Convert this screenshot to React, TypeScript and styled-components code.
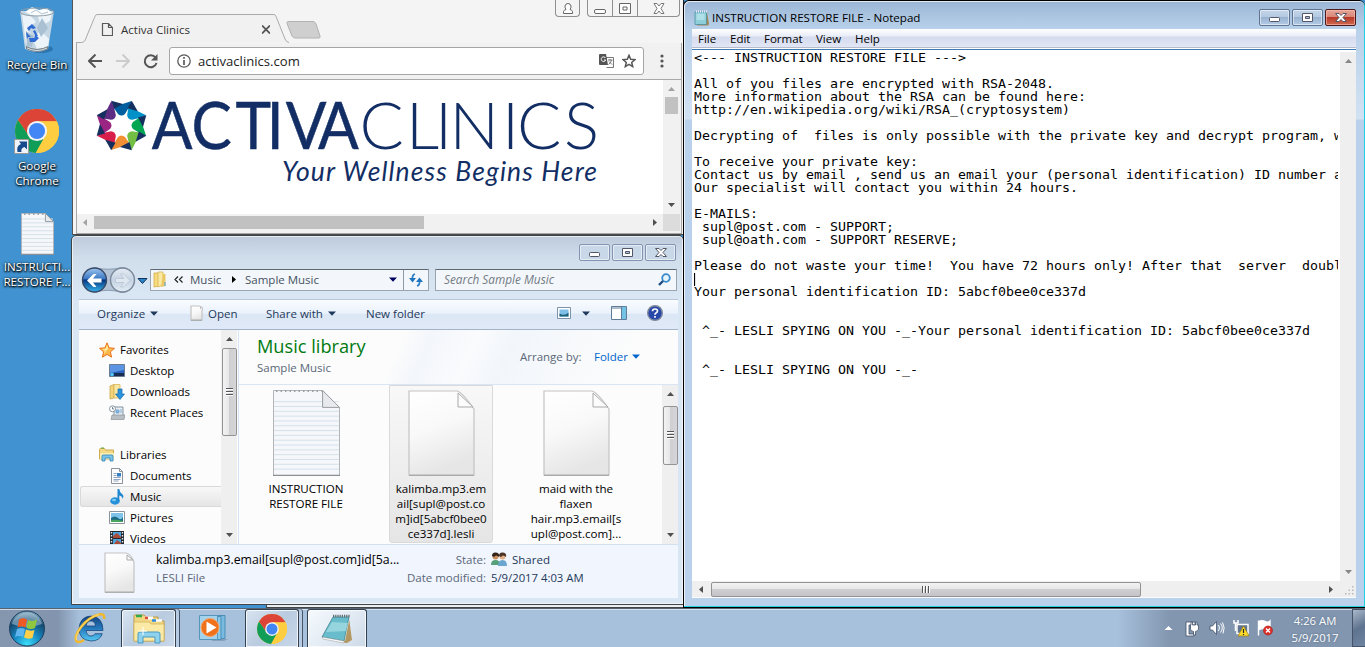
import React from "react";
import styled, { createGlobalStyle, css } from "styled-components";

const Global = createGlobalStyle`
  * { box-sizing: border-box; }
  html, body { margin: 0; padding: 0; overflow: hidden; }
  body { font-family: "Open Sans", "Noto Sans", sans-serif; font-size: 11.5px; color: #000; }
  svg { display: block; flex: none; }
`;

const Desktop = styled.div`
  position: relative;
  width: 1365px;
  height: 647px;
  overflow: hidden;
  background: #4093d0;
`;

/* ---------- shared text and parts ---------- */

const Label = styled.span<{ $color?: string; $size?: number; $ls?: number; $w?: number }>`
  display: block;
  flex: none;
  white-space: pre;
  line-height: 15px;
  color: ${(p) => p.$color ?? "#000"};
  font-size: ${(p) => p.$size ?? 11.5}px;
  letter-spacing: ${(p) => p.$ls ?? 0}px;
  width: ${(p) => (p.$w ? `${p.$w}px` : "auto")};
`;

const Spacer = styled.div<{ $w?: number }>`
  flex: ${(p) => (p.$w === undefined ? "1 1 0" : `0 0 ${p.$w}px`)};
`;

const Down = ({ c = "#1e395b", w = 8 }: { c?: string; w?: number }) => (
  <svg width={w} height={w / 2 + 1} viewBox="0 0 8 5"><path d="M0 .5h8L4 4.8z" fill={c} /></svg>
);

/* ---------- desktop icons ---------- */

const Shortcuts = styled.div`
  position: absolute;
  left: 0;
  top: 0;
  width: 74px;
`;

const Shortcut = styled.div<{ $h: number; $pad: number; $gap: number }>`
  height: ${(p) => p.$h}px;
  padding-top: ${(p) => p.$pad}px;
  display: flex;
  flex-direction: column;
  align-items: center;
  gap: ${(p) => p.$gap}px;
`;

const ShortcutText = styled.div`
  width: 72px;
  font-size: 11.6px;
  line-height: 15px;
  color: #fff;
  text-align: center;
  white-space: pre;
  text-shadow: 0 1px 2px #000, 1px 1px 2px rgba(0, 0, 0, 0.9), 0 0 3px rgba(0, 0, 0, 0.6);
`;

const RecycleBin = () => (
  <svg width="38" height="48" viewBox="0 0 38 48">
    <ellipse cx="23" cy="43" rx="12" ry="4" fill="#1d5f99" opacity=".6" />
    <path d="M2 5 7 43q12 6 23 0L36 5z" fill="#c4d6e4" />
    <path d="M4 8 8 38l6-9-5-6 9-7-6-7zM19 8l4 12 9-5 2-8zM14 31l9-6 8 8-1 8-11 2z" fill="#edf4f9" />
    <path d="m8 25 8 5-2 11-5-1zM24 12l6 10-7 9-4-9z" fill="#a9c1d3" />
    <path d="M7 6 14 1l7 3 8-2 5 5-8 4-10-1z" fill="#fafcfd" />
    <path d="m13 7 5-3 6 4 6-2" fill="none" stroke="#afc2d0" />
    <ellipse cx="19" cy="6" rx="17" ry="4" fill="none" stroke="#8b9ba8" />
    <path d="M8 40q11 6 22 0v3q-11 6-22 0z" fill="#75818a" /><path d="M9 42q10 5 20 0" stroke="#dce3e6" fill="none" />
    <path d="m9 22 5-4 4 4-3 1-2-1-2 3zM17 24l3 6-4 2 1-3-2-4zM8 26l5 5h-3l-1 2zM11 32h6l1-2 3 2-4 4h-5z" fill="#2f6bd2" />
  </svg>
);

const ChromeLogo = ({ size }: { size: number }) => (
  <svg width={size} height={size} viewBox="0 0 48 48">
    <circle cx="24" cy="24" r="24" fill="#ffcd40" />
    <path d="M3.2 12A24 24 0 0 1 44.8 12L45.5 13.5H24L14.9 29.3z" fill="#db4437" />
    <path d="M3.2 12A24 24 0 0 0 22.5 47.9L33 29.2H15z" fill="#0f9d58" />
    <path d="M24 13.3h21.6A24 24 0 0 1 23 48l10.3-18.7z" fill="#ffcd40" />
    <circle cx="24" cy="24" r="11" fill="#f4f4f4" />
    <circle cx="24" cy="24" r="8.8" fill="#4285f4" />
  </svg>
);

const ChromeShortcut = () => (
  <svg width="48" height="46" viewBox="0 0 48 46">
    <g transform="translate(2 0)"><ChromeLogo size={44} /></g>
    <rect x="1.5" y="30.5" width="14" height="14" fill="#eef4fa" stroke="#9a9a9a" />
    <path d="M4.500 43q-1.500-6 3.500-8l-2-2.500h8v8l-2.500-2.500Q7.500 39 8.500 43z" fill="#164a8c" />
  </svg>
);

const TextFile = ({ w, h, lines }: { w: number; h: number; lines: number }) => {
  const fold = w * 0.26;
  const body = `M.5 .5H${w - fold}L${w - 0.5} ${fold}V${h - 0.5}H.5z`;
  return (
    <svg width={w} height={h} viewBox={`0 0 ${w} ${h}`}>
      <path d={body} fill="#f5f7fa" stroke="#b2b6ba" />
      {Array.from({ length: lines }, (_, i) => (
        <path key={i} d={`M1 ${h * 0.13 + (i * h * 0.84) / lines + 0.5}H${w - 1}`} stroke="#d5e1ea" />
      ))}
      <path d={`M${w - fold} .5V${fold}H${w - 0.5}z`} fill="#e7e9ec" stroke="#9a9ea2" />
      <path d={`M3 1H${w - fold - 1}`} stroke="#9ea2a6" strokeWidth="2" strokeDasharray="1.5 3" />
      <path d={`M0 ${h - 0.6}H${w}`} stroke="#8b8f95" strokeWidth="1.2" />
    </svg>
  );
};

const BlankFile = ({ w, h, id }: { w: number; h: number; id: string }) => {
  const f = Math.round(w * 0.26);
  return (
    <svg width={w} height={h} viewBox={`0 0 ${w} ${h}`}>
      <defs>
        <linearGradient id={id} x1="0" y1="0" x2=".3" y2="1">
          <stop offset="0" stopColor="#fff" /><stop offset=".5" stopColor="#f9f9f9" /><stop offset="1" stopColor="#e6e6e6" />
        </linearGradient>
      </defs>
      <path d={`M1 1H${w - f - 1}Q${w - f + 4} 2 ${w - 1} ${f + 2}V${h - 1}H1z`} fill={`url(#${id})`} stroke="#c3c3c3" strokeWidth="1.2" />
      <path d={`M${w - f} 3V${f}H${w - 2}z`} fill="#fcfcfc" stroke="#a9a9a9" />
      <path d={`M1 ${h - 0.7}H${w - 1}`} stroke="#aaa" strokeWidth="1.2" />
    </svg>
  );
};

/* ---------- browser window ---------- */

const BrowserWindow = styled.section`
  position: absolute;
  left: 72px;
  top: 0;
  width: 612px;
  height: 235px;
  background: #f4f4f4;
  border-left: 1px solid #555;
  border-bottom: 1px solid #4a4a4a;
  border-right: 1px solid #222;
  padding-left: 1px;
  display: flex;
  flex-direction: column;
`;

const TabStrip = styled.div`
  height: 43px;
  flex: none;
  display: flex;
  align-items: flex-start;
  padding-left: 2px;
`;

const Tab = styled.div`
  position: relative;
  width: 212px;
  height: 43px;
  margin-top: 0;
  display: flex;
  align-items: center;
  padding: 15px 0 0 25px;
  gap: 8px;
  & > svg, & > span { position: relative; }
`;

const TabShape = styled.svg`
  && { position: absolute; left: 0; top: 0; }
`;

const BrowserButtons = styled.div`
  display: flex;
  gap: 7px;
`;

const ButtonGroup = styled.div`
  display: flex;
  height: 17px;
  border: 1px solid #8f8f8f;
  border-top: 0;
  border-radius: 0 0 4px 4px;
`;

const GroupButton = styled.div<{ $w: number }>`
  width: ${(p) => p.$w}px;
  display: flex;
  justify-content: center;
  align-items: center;
  & + & { border-left: 1px solid #8f8f8f; }
`;

const BrowserBody = styled.div`
  flex: 1;
  margin: 0 1px 1px 2px;
  border: 1px solid #a8a8a8;
  border-top-width: 0;
  background: #f1f1f1;
  display: flex;
  flex-direction: column;
`;

const AddressRow = styled.div`
  height: 37px;
  flex: none;
  display: flex;
  align-items: center;
  padding: 0 12px 0 11px;
  border-bottom: 1px solid #a9a9a9;
`;

const Omnibox = styled.div`
  width: 475px;
  height: 28px;
  margin: 0 16px 0 11px;
  padding: 0 7px 0 7px;
  display: flex;
  flex: none;
  align-items: center;
  background: #fff;
  border: 1px solid #a6a6a6;
  border-radius: 3px;
`;

const PageGrid = styled.div`
  flex: 1;
  display: grid;
  grid-template: 134px 17px / 1fr 17px;
  margin: 0 1px 2px 0;
`;

const Page = styled.div`
  background: #fff;
  overflow: hidden;
`;

const FlatBar = styled.div<{ $vertical?: boolean }>`
  display: flex;
  flex-direction: ${(p) => (p.$vertical ? "column" : "row")};
  align-items: center;
  background: #f1f1f1;
  padding: ${(p) => (p.$vertical ? "7px 0 7px" : "0 6px 0 6px")};
`;

const FlatThumb = styled.div<{ $w: number; $h: number; $m: number; $vertical?: boolean }>`
  width: ${(p) => p.$w}px;
  height: ${(p) => p.$h}px;
  background: #c1c1c1;
  margin: ${(p) => (p.$vertical ? `${p.$m}px 0 auto` : `0 auto 0 ${p.$m}px`)};
`;

const Corner = styled.div`
  background: #dcdcdc;
`;

const petals = ["#005f9e", "#0091c8", "#00a651", "#72bf44", "#f08f33", "#d81e4b", "#9b2583", "#5c2d82"];

const BrandLogo = () => (
  <svg width="586" height="134" viewBox="77 80 586 134">
    <g transform="translate(121.5 125.5)">
      {petals.map((c, i) => (
        <g key={c} transform={`rotate(${i * 45})`}>
          <path d="M-8-21.500 1-21.500 10.200-24.600 8-19 3.500-11.500Q0-8.500-3.500-11.500L-8-18z" fill={c} />
          <path d="M-10.300-24.800 1.500-21.500-8-16.500z" fill="#152f5f" />
        </g>
      ))}
    </g>
    <g fill="#122e64" fontFamily="Lato, sans-serif">
      <text transform="translate(150 0) scale(.92 1)" y="149" fontSize="65.500" fontWeight="400" x="2 45 93 127 147.500 182.500" stroke="#122e64" strokeWidth=".5">ACTIVA</text>
      <text y="149" fontSize="65.500" fontWeight="300" x="359.500 406 435 449.500 502 517 564">CLINICS</text>
      <text x="282" y="181" fontSize="26.500" fontStyle="italic" textLength="315">Your Wellness Begins Here</text>
    </g>
  </svg>
);

const tri = {
  up: "M0 4h7L3.500 0z",
  down: "M0 0h7L3.500 4z",
  left: "M4 0v7L0 3.500z",
  right: "M0 0v7l4-3.500z",
};
const Tri = ({ d, c = "#505050" }: { d: keyof typeof tri; c?: string }) => {
  const side = d === "left" || d === "right";
  return <svg width={side ? 4 : 7} height={side ? 7 : 4}><path d={tri[d]} fill={c} /></svg>;
};

const Browser = () => (
  <BrowserWindow>
    <TabStrip>
      <Tab>
        <TabShape width="250" height="43">
          <path d="M0 42.500H5C8 42.500 9 41 10 38L18.500 17.500Q19.500 14.500 21 14.500H198Q199.500 14.500 200.500 17.500L209 39Q210.500 42.500 213 42.500" fill="#f1f1f1" stroke="#aaa" />
          <path d="M212 21.500h25q2 0 3 2.500l4 12q.5 2-1 2h-24q-2 0-3-2l-5-12.500q-.5-2 1.500-2z" fill="#cfcfcf" stroke="#b2b2b2" />
        </TabShape>
        <svg width="12" height="15"><path d="M1.500 1.500h6l4 4v8h-10zM7.500 1.500v4h4" fill="none" stroke="#5a5a5a" strokeWidth="1.200" /></svg>
        <Label $color="#333" $w={133}>Activa Clinics</Label>
        <svg width="8" height="9"><path d="m0 .5 8 8m0-8-8 8" stroke="#555" strokeWidth="1.800" /></svg>
      </Tab>
      <Spacer />
      <BrowserButtons>
        <ButtonGroup>
          <GroupButton $w={23}>
            <svg width="12" height="13"><path d="M1.500 11.500V9.500Q2 8 4 7.500 2.800 6 3 4 3.500 1.500 6 1.500T9 4Q9.200 6 8 7.500q2 .5 2.500 2v2z" fill="#fff" stroke="#666" /></svg>
          </GroupButton>
        </ButtonGroup>
        <ButtonGroup>
          <GroupButton $w={24}><svg width="12" height="13"><rect x=".5" y="7.500" width="11" height="4" rx="1.500" fill="#fff" stroke="#666" /></svg></GroupButton>
          <GroupButton $w={25}><svg width="12" height="11"><path d="M.5.500h11v10H.5zM4 4h4v3H4z" fill="#fff" stroke="#666" /></svg></GroupButton>
          <GroupButton $w={42}><svg width="12" height="11"><path d="M1 .5h3L6 3 8 .500h3L8 5.500l3 5H8L6 8l-2 2.500H1l3-5z" fill="#fff" stroke="#777" /></svg></GroupButton>
        </ButtonGroup>
      </BrowserButtons>
      <Spacer $w={3} />
    </TabStrip>
    <BrowserBody>
      <AddressRow>
        <svg width="14" height="14"><path d="M7.500.500 1 7l6.500 6.500M1.500 7H14" fill="none" stroke="#555" strokeWidth="2" /></svg>
        <Spacer $w={14} />
        <svg width="14" height="14"><path d="M6.500.500 13 7l-6.500 6.500M12.500 7H0" fill="none" stroke="#ccc" strokeWidth="2" /></svg>
        <Spacer $w={13} />
        <svg width="15" height="15"><path d="M12.500 3.500A6 6 0 1 0 13.500 9" fill="none" stroke="#555" strokeWidth="2" /><path d="M14.500 0v6.500H8z" fill="#555" /></svg>
        <Omnibox>
          <svg width="14" height="14"><circle cx="7" cy="7" r="6.200" fill="none" stroke="#5a5a5a" strokeWidth="1.300" /><path d="M7 6v5M7 3v1.700" stroke="#5a5a5a" strokeWidth="1.700" /></svg>
          <Spacer $w={7} />
          <Label $size={13.1} $color="#222">activaclinics.com</Label>
          <Spacer />
          <svg width="15" height="14">
            <path d="M6 3.500h8.500v10h-7" fill="#fff" stroke="#777" />
            <path d="M1 0h6l2 11H1Q0 11 0 10V1Q0 0 1 0z" fill="#555" />
            <path d="M6.500 4A2.300 2.300 0 1 0 6.700 6H5" fill="none" stroke="#fff" />
            <path d="M9 6h4.500M11 5v1M12.500 6Q12 9 9.500 10.500M10 7.500l3 3" fill="none" stroke="#666" strokeWidth=".9" />
          </svg>
          <Spacer $w={8} />
          <svg width="14" height="14"><path d="m7 1.300 1.700 4 4.300.3-3.300 2.800 1 4.200L7 10.400l-3.700 2.200 1-4.200L1 5.600l4.300-.3z" fill="none" stroke="#555" strokeWidth="1.500" /></svg>
        </Omnibox>
        <svg width="4" height="14"><g fill="#555"><circle cx="2" cy="2" r="1.600" /><circle cx="2" cy="7" r="1.600" /><circle cx="2" cy="12" r="1.600" /></g></svg>
      </AddressRow>
      <PageGrid>
        <Page><BrandLogo /></Page>
        <FlatBar $vertical>
          <Tri d="up" c="#a3a3a3" />
          <FlatThumb $vertical $w={13} $h={17} $m={6} />
          <Tri d="down" />
        </FlatBar>
        <FlatBar>
          <Tri d="left" c="#a3a3a3" />
          <FlatThumb $w={330} $h={13} $m={7} />
          <Tri d="right" />
        </FlatBar>
        <Corner />
      </PageGrid>
    </BrowserBody>
  </BrowserWindow>
);

/* ---------- Aero caption buttons and scroll bars ---------- */

const Caption = styled.div`
  display: flex;
  gap: 2px;
`;

const CaptionButton = styled.div<{ $kind: "glass" | "active" | "close" }>`
  width: 31px;
  height: 17px;
  display: flex;
  align-items: center;
  justify-content: center;
  border-radius: 2px;
  border: 1px solid ${(p) => (p.$kind === "close" ? "#4d1a1c" : p.$kind === "active" ? "#5f7493" : "#8494b0")};
  box-shadow: inset 0 0 0 1px ${(p) => (p.$kind === "close" ? "rgba(255,190,180,.6)" : "rgba(255,255,255,.5)")};
  background: ${(p) =>
    p.$kind === "close"
      ? "linear-gradient(#e5a497 0%, #d98776 48%, #b8392a 50%, #cf6a50 100%)"
      : p.$kind === "active"
        ? "linear-gradient(#c3d5e9 0%, #b3c8e0 48%, #98b2d1 50%, #b3cbe5 100%)"
        : "#c9d8e8"};
`;

const CaptionButtons = ({ active }: { active?: boolean }) => {
  const s = "#535666";
  return (
    <Caption>
      <CaptionButton $kind={active ? "active" : "glass"}><svg width="11" height="9"><rect x=".5" y="4.500" width="10" height="4" rx="1" fill="#fff" stroke={s} /></svg></CaptionButton>
      <CaptionButton $kind={active ? "active" : "glass"}><svg width="11" height="9"><path d="M.5.500h10v8H.5z" fill="#fff" stroke={s} /><path d="M3.500 3.500h4v2h-4z" fill="#a9bdd4" stroke={s} /></svg></CaptionButton>
      <CaptionButton $kind={active ? "close" : "glass"}><svg width="12" height="9"><path d="M.5.500h3.500L6 2.500 8 .500h3.500L8 4.500l3.500 4H8L6 6.500l-2 2H.5L4 4.500z" fill="#fff" stroke={s} /></svg></CaptionButton>
    </Caption>
  );
};

const AeroBar = styled.div<{ $vertical?: boolean; $len: number }>`
  flex: none;
  display: flex;
  align-items: center;
  background: #efefef;
  ${(p) =>
    p.$vertical
      ? css`flex-direction: column; width: 16px; height: ${p.$len}px; padding: 7px 0;`
      : css`height: 16px; width: ${p.$len}px; padding: 0 7px;`}
`;

const AeroThumb = styled.div<{ $vertical?: boolean; $len: number; $m: number }>`
  flex: none;
  display: flex;
  align-items: center;
  justify-content: center;
  border: 1px solid #939393;
  border-radius: 2px;
  ${(p) =>
    p.$vertical
      ? css`width: 15px; height: ${p.$len}px; margin: ${p.$m}px 0 auto; background: linear-gradient(90deg, #f3f3f3, #e6e6e8 48%, #cfcfd2 50%, #d6d6d9);`
      : css`height: 15px; width: ${p.$len}px; margin: 0 auto 0 ${p.$m}px; background: linear-gradient(#f3f3f3, #e6e6e8 48%, #cfcfd2 50%, #c4c4c8);`}
`;

/* ---------- explorer window ---------- */

const ExplorerWindow = styled.section`
  position: absolute;
  left: 71px;
  top: 235px;
  width: 613px;
  height: 370px;
  border: 1px solid #3e4347;
  border-radius: 5px 5px 0 0;
  box-shadow: inset 0 0 0 1px rgba(255, 255, 255, 0.65);
  background: linear-gradient(#bccadb 0, #d0deec 22px, #d9e6f3 60px, #d9e6f3);
  padding: 0 5px 6px 7px;
  display: flex;
  flex-direction: column;
`;

const ExplorerTitle = styled.div`
  height: 31px;
  flex: none;
  display: flex;
  justify-content: flex-end;
  padding: 8px 2px 0 0;
`;

const NavRow = styled.div`
  height: 32px;
  flex: none;
  display: flex;
  align-items: flex-start;
`;

const NavField = styled.div<{ $w: number }>`
  width: ${(p) => p.$w}px;
  height: 22px;
  margin-top: 2px;
  padding-bottom: 1px;
  display: flex;
  flex: none;
  align-items: center;
  background: #f3f7fb;
  border: 1px solid #9aa5b2;
  border-top-color: #5e6871;
  border-radius: 1px;
`;

const RefreshCell = styled.div`
  width: 25px;
  height: 20px;
  display: flex;
  align-items: center;
  justify-content: center;
  border-left: 1px solid #8d99a6;
`;

const CommandBar = styled.div`
  height: 31px;
  flex: none;
  display: flex;
  align-items: center;
  padding: 0 15px 3px 18px;
  border-top: 1px solid #b9c6d8;
  border-bottom: 1px solid #a3b4c9;
  background: linear-gradient(#fafcff 0, #eaf2fc 45%, #dce7f5 50%, #dfe9f7 100%);
`;

const ExplorerMain = styled.div`
  height: 214px;
  flex: none;
  display: flex;
  background: #fcfcfc;
  overflow: hidden;
`;

const Sidebar = styled.div`
  width: 142px;
  flex: none;
  padding-top: 9px;
  overflow: hidden;
`;

const SideRow = styled.div<{ $sub?: boolean; $selected?: boolean }>`
  height: 21px;
  display: flex;
  align-items: center;
  gap: 5px;
  padding-left: ${(p) => (p.$sub ? 28 : 18)}px;
  border: 1px solid transparent;
  margin-left: 1px;
  ${(p) =>
    p.$selected &&
    css`
      border-color: #d9d9d9;
      border-right: 0;
      border-radius: 3px 0 0 3px;
      background: linear-gradient(#f8f8f8, #e5e5e5);
    `}
`;

const Library = styled.div`
  flex: 1;
  min-width: 0;
  margin-left: 1px;
  border-left: 1px solid #d6e5f5;
  display: flex;
  flex-direction: column;
`;

const LibraryHead = styled.div`
  height: 55px;
  flex: none;
  display: flex;
  border-bottom: 1px solid #d9e5f3;
  padding: 6px 38px 0 18px;
  background: linear-gradient(115deg, #fcfcfc 36%, #f3f6fb 42%, #fafbfd 52%, #f2f6fb 60%, #fcfcfc 88%);
`;

const HeadText = styled.div`
  display: flex;
  flex-direction: column;
  justify-content: flex-end;
  gap: 6px;
  padding-bottom: 9px;
`;

const ArrangeRow = styled.div`
  display: flex;
  align-items: center;
  height: 41px;
`;

const Files = styled.div`
  flex: 1;
  display: flex;
  padding-left: 15px;
`;

const FileItem = styled.div<{ $selected?: boolean }>`
  width: 104px;
  height: 158px;
  flex: none;
  padding-top: 4px;
  display: flex;
  flex-direction: column;
  align-items: center;
  gap: 5px;
  border: 1px solid ${(p) => (p.$selected ? "#dadada" : "transparent")};
  border-radius: 0 0 3px 3px;
  background: ${(p) => (p.$selected ? "linear-gradient(#f8f8f8, #e5e5e5)" : "none")};
  & + & { margin-left: 31px; }
`;

const FileName = styled.div`
  font-size: 11.6px;
  line-height: 15px;
  text-align: center;
  white-space: pre;
`;

const Details = styled.div`
  height: 54px;
  flex: none;
  display: flex;
  padding: 7px 0 0 25px;
  border-top: 1px solid #d3e0f0;
  background: #f1f5fd;
`;

const DetailCol = styled.div<{ $w?: number; $right?: boolean }>`
  width: ${(p) => (p.$w ? `${p.$w}px` : "auto")};
  display: flex;
  flex-direction: column;
  align-items: ${(p) => (p.$right ? "flex-end" : "flex-start")};
  gap: 3px;
`;

const SharedRow = styled.div`
  display: flex;
  height: 15px;
  align-items: center;
  gap: 5px;
`;

const NavButtons = () => (
  <svg width="70" height="27" viewBox="80 267 70 27">
    <defs>
      <linearGradient id="backFill" x1="0" y1="0" x2="0" y2="1">
        <stop offset="0" stopColor="#9cc5ee" /><stop offset=".45" stopColor="#3977c4" /><stop offset=".5" stopColor="#06357f" /><stop offset="1" stopColor="#35b6ef" />
      </linearGradient>
      <linearGradient id="fwdFill" x1="0" y1="0" x2="0" y2="1">
        <stop offset="0" stopColor="#e5edf5" /><stop offset=".5" stopColor="#c4d2e2" /><stop offset="1" stopColor="#e4edf6" />
      </linearGradient>
    </defs>
    <path d="M94 267.500Q108 271 122 267.500A12.500 12.500 0 0 1 122 292.500Q108 288 94 292.500z" fill="#b4c4d6" stroke="#8c9db3" />
    <circle cx="94.500" cy="280" r="12" fill="url(#backFill)" stroke="#3a4b68" strokeWidth="1.400" />
    <circle cx="122.500" cy="280" r="12" fill="url(#fwdFill)" stroke="#7c899b" strokeWidth="1.400" />
    <path d="m87 280.500 6.500-6.500h3l-3.500 4.500h8.500v4H93l3.500 4.500h-3z" fill="#fff" />
    <path d="m130 280.500-6.500-6.500h-3l3.500 4.500h-8.500v4h8.500l-3.500 4.500h3z" fill="#dfe8f1" stroke="#b5c2d1" strokeWidth=".7" />
    <path d="M138 278.500h9l-4.500 5z" fill="#2a85c8" stroke="#14345e" />
  </svg>
);

const FolderIcon = () => (
  <svg width="14" height="17"><path d="M1 2h4l1 1v12l-5 1z" fill="#f6da7d" stroke="#d2ae4a" strokeWidth=".8" /><path d="M5 1h5v13l-5 2z" fill="#fbe9a3" stroke="#d7b657" strokeWidth=".8" /><path d="M10 3h2.500v12L8 16z" fill="#eac763" /><path d="M12 11v4" stroke="#4ea4d8" /></svg>
);

const icons: Record<string, React.ReactNode> = {
  star: <svg width="16" height="16"><path d="m8 .800 2.100 5 5.400.500-4.100 3.600 1.200 5.300L8 12.400l-4.600 2.800 1.200-5.300L.500 6.300l5.400-.500z" fill="#fcb94d" stroke="#e8741c" /><path d="m8 3 1.300 3.500L5 12l.8-3.500L3 7l3.500-.3z" fill="#ffe899" /></svg>,
  desktop: <svg width="16" height="14"><path d="M.5.500h15v12H.5z" fill="#2a62c0" stroke="#6d7d91" /><path d="M1 1h14v5L1 9z" fill="#5a94e3" /><path d="M5 9h10v3H5z" fill="#1a2c52" /><circle cx="3" cy="10.500" r="1.700" fill="#54c7ee" /></svg>,
  downloads: <svg width="16" height="16"><path d="M1 2l4-1.500V14l-4 1z" fill="#f3d47a" stroke="#c9a54b" strokeWidth=".8" /><path d="M5 .500h6V14H5z" fill="#fae7a2" stroke="#d7b65a" strokeWidth=".8" /><path d="M9 5h4v5h2.500L11 15.500 6.500 10H9z" fill="#2b94df" stroke="#1669a8" strokeWidth=".7" /></svg>,
  recent: <svg width="16" height="15"><path d="M5 2h9v10H5z" fill="#e8eef3" stroke="#8393a0" /><path d="M7 5h3v3H7zM11 5h2M11 7h2" fill="#85bae5" stroke="#6ba0cc" strokeWidth=".8" /><path d="M3 10h13l-1 4.500H2z" fill="#b9c0c5" stroke="#8b949b" strokeWidth=".7" /><circle cx="3.500" cy="3.800" r="3" fill="#fff" stroke="#8893a0" /><path d="M3.500 2v2H5" fill="none" stroke="#456" strokeWidth=".7" /></svg>,
  libraries: <svg width="16" height="15"><path d="M.5 2.500q0-1 1-1h4l1 1.500h8v9H.5z" fill="#f4da85" stroke="#cdaa50" /><path d="M1 6h14v6H1z" fill="#fbedb4" /><path d="M3 14V9q0-1 1-1h9q1 0 1 1v5h-3v-3H6v3z" fill="#78c4ea" stroke="#3388bb" strokeWidth=".8" /><path d="M2 1h3" stroke="#5ca848" /></svg>,
  documents: <svg width="16" height="16"><path d="M2.500.500h8l3 3v12h-11z" fill="#fff" stroke="#8b929a" /><path d="M10.500.500v3h3" fill="none" stroke="#8b929a" /><path d="M4.500 5.500h3M4.500 7.500h3M4.500 9.500h7M4.500 11.500h7M4.500 13h5" stroke="#879cba" strokeWidth=".9" /><path d="M8 5h4v3.500H8z" fill="#337fc5" /></svg>,
  music: <svg width="16" height="16"><ellipse cx="6" cy="12" rx="4.800" ry="3.700" fill="#2491da" /><path d="M8.500 0h1.800Q10.500 3 13 5t.5 5Q13.500 7 10.300 6.500V12H8.500z" fill="#1f86d0" /><ellipse cx="5" cy="11" rx="2" ry="1.300" fill="#7cc9f2" /></svg>,
  pictures: <svg width="16" height="14"><path d="M.5.500h15v12H.5z" fill="#fff" stroke="#8d949b" /><path d="M2 2h12v9H2z" fill="#7ec4ea" /><path d="M2 7q4-3 7 0t5-1v5H2z" fill="#1c6c86" /><path d="M2 9q5-1 12 1v1H2z" fill="#4aa55f" /></svg>,
  videos: <svg width="16" height="16"><path d="M1 0h14v16H1z" fill="#22282e" /><path d="M4 1h8v6H4zM4 8h8v7H4z" fill="#4fa3da" /><path d="m4 5 4-3 4 4v1H4zM5 13l3-4 4 3v3z" fill="#a94b37" /><path d="M2.500 1v14M13.500 1v14" stroke="#e8edf0" strokeWidth="1.400" strokeDasharray="1.500 1.500" /></svg>,
};

const places: { name?: string; icon?: string; sub?: boolean; selected?: boolean }[] = [
  { name: "Favorites", icon: "star" },
  { name: "Desktop", icon: "desktop", sub: true },
  { name: "Downloads", icon: "downloads", sub: true },
  { name: "Recent Places", icon: "recent", sub: true },
  {},
  { name: "Libraries", icon: "libraries" },
  { name: "Documents", icon: "documents", sub: true },
  { name: "Music", icon: "music", sub: true, selected: true },
  { name: "Pictures", icon: "pictures", sub: true },
  { name: "Videos", icon: "videos", sub: true },
];

const GripLines = () => (
  <svg width="7" height="9"><path d="M0 .500h7M0 3.500h7M0 6.500h7" stroke="#555" /><path d="M0 1.500h7M0 4.500h7M0 7.500h7" stroke="#fff" /></svg>
);

const Explorer = () => (
  <ExplorerWindow>
    <ExplorerTitle><CaptionButtons /></ExplorerTitle>
    <NavRow>
      <Spacer $w={1} />
      <NavButtons />
      <NavField $w={279}>
        <Spacer $w={2} />
        <FolderIcon />
        <Spacer $w={7} />
        <svg width="9" height="7"><path d="M4 .500 1 3.500l3 3M8.500.500l-3 3 3 3" fill="none" stroke="#222" strokeWidth="1.200" /></svg>
        <Spacer $w={7} />
        <Label $color="#46525f" $w={42}>Music</Label>
        <Tri d="right" c="#000" />
        <Spacer $w={9} />
        <Label $color="#46525f">Sample Music</Label>
        <Spacer />
        <Down c="#000060" />
        <Spacer $w={6} />
        <RefreshCell>
          <svg width="14" height="14"><path d="M6 1Q3 2 3.500 6M8 13q3-1 2.500-5" fill="none" stroke="#2f82c9" strokeWidth="1.800" /><path d="M0 5h7L3.500 9.500zM7 9h7l-3.500-4.500z" fill="#2374be" /></svg>
        </RefreshCell>
      </NavField>
      <Spacer $w={6} />
      <NavField $w={242}>
        <Spacer $w={8} />
        <Label $color="#747b84" $size={11.8} as="i">Search Sample Music</Label>
        <Spacer />
        <svg width="13" height="13"><circle cx="8" cy="5" r="3.800" fill="#e6f4fd" stroke="#3d8bcb" strokeWidth="1.800" /><path d="M5 8 1 12" stroke="#1c4b82" strokeWidth="2.400" /></svg>
        <Spacer $w={5} />
      </NavField>
    </NavRow>
    <CommandBar>
      <Label $color="#1e395b" $w={53}>Organize</Label><Down />
      <Spacer $w={32} />
      <BlankFile w={13} h={16} id="openFile" />
      <Spacer $w={5} />
      <Label $color="#1e395b" $w={58}>Open</Label>
      <Label $color="#1e395b" $w={62}>Share with</Label><Down />
      <Spacer $w={30} />
      <Label $color="#1e395b">New folder</Label>
      <Spacer />
      <svg width="14" height="12"><path d="M.5.500h13v11H.5z" fill="#fff" stroke="#7f93aa" /><path d="M2.500 2.500h9v7h-9z" fill="#7ebfe8" /><path d="M2.500 6.500q5 3 9-1v4h-9z" fill="#1a6179" /></svg>
      <Spacer $w={11} /><Down />
      <Spacer $w={21} />
      <svg width="16" height="14"><path d="M.5.500h15v13H.5z" fill="#fff" stroke="#5f7c99" /><path d="M1 2h9M10.500 1v12" stroke="#5f7c99" /><path d="M11 1h4v12h-4z" fill="#74c2e4" /></svg>
      <Spacer $w={20} />
      <svg width="16" height="16"><circle cx="8" cy="8" r="7.300" fill="#2848a9" stroke="#7d879c" strokeWidth="1.400" /><path d="M5.500 6.200Q5.500 4 8 4t2.500 2q0 1.200-1.500 2-1 .500-1 1.700M8 11v1.700" fill="none" stroke="#fff" strokeWidth="1.700" /></svg>
    </CommandBar>
    <ExplorerMain>
      <Sidebar>
        {places.map((p, i) => (
          <SideRow key={i} $sub={p.sub} $selected={p.selected}>
            {p.icon && icons[p.icon]}
            {p.name && <Label>{p.name}</Label>}
          </SideRow>
        ))}
      </Sidebar>
      <AeroBar $vertical $len={214}>
        <Tri d="up" />
        <AeroThumb $vertical $len={88} $m={7}><GripLines /></AeroThumb>
        <Tri d="down" />
      </AeroBar>
      <Library>
        <LibraryHead>
          <HeadText>
            <Label $size={18.2} $color="#007a10">Music library</Label>
            <Label $color="#5a6779">Sample Music</Label>
          </HeadText>
          <Spacer />
          <ArrangeRow>
            <Label $color="#5a6779" $w={74}>Arrange by:</Label>
            <Label $color="#0066cc" $w={38}>Folder</Label>
            <Down c="#0066cc" />
          </ArrangeRow>
        </LibraryHead>
        <Files>
          <FileItem>
            <TextFile w={67} h={86} lines={15} />
            <FileName>{"INSTRUCTION\nRESTORE FILE"}</FileName>
          </FileItem>
          <FileItem $selected>
            <BlankFile w={67} h={86} id="fileA" />
            <FileName>{"kalimba.mp3.em\nail[supl@post.co\nm]id[5abcf0bee0\nce337d].lesli"}</FileName>
          </FileItem>
          <FileItem>
            <BlankFile w={67} h={86} id="fileB" />
            <FileName>{"maid with the\nflaxen\nhair.mp3.email[s\nupl@post.com]..."}</FileName>
          </FileItem>
          <Spacer />
          <AeroBar $vertical $len={159}>
            <Tri d="up" />
            <AeroThumb $vertical $len={59} $m={10}><GripLines /></AeroThumb>
            <Tri d="down" />
          </AeroBar>
        </Files>
      </Library>
    </ExplorerMain>
    <Details>
      <BlankFile w={31} h={41} id="detailFile" />
      <Spacer $w={21} />
      <DetailCol $w={245}>
        <Label $size={12.3}>kalimba.mp3.email[supl@post.com]id[5a...</Label>
        <Label $color="#5a6779">LESLI File</Label>
      </DetailCol>
      <DetailCol $w={85} $right>
        <Label $color="#5a6779">State:</Label>
        <Label $color="#5a6779">Date modified:</Label>
      </DetailCol>
      <Spacer $w={5} />
      <DetailCol>
        <SharedRow>
          <svg width="16" height="15"><circle cx="4.500" cy="4.500" r="3" fill="#c98f61" /><path d="M1 4Q1 0 5 .500T8 5Q5 2 3 5z" fill="#33231b" /><path d="M0 13Q0 8 4.500 8T9 13z" fill="#55a079" /><circle cx="11.500" cy="4.500" r="3" fill="#e0b088" /><path d="M8 4Q8 0 12 .500T15 5Q12 2 10 5z" fill="#4b3325" /><path d="M7 14Q7 8 11.500 8t4.500 6z" fill="#6ba6ce" /></svg>
          <Label $color="#1e395b">Shared</Label>
        </SharedRow>
        <Label $color="#1e395b" $size={11.3}>5/9/2017 4:03 AM</Label>
      </DetailCol>
    </Details>
  </ExplorerWindow>
);

/* ---------- notepad window ---------- */

const NotepadWindow = styled.section`
  position: absolute;
  left: 683px;
  top: 0;
  width: 682px;
  height: 608px;
  border: 1px solid #000;
  border-width: 1px 0 1px 1px;
  border-radius: 6px 6px 0 0;
  box-shadow: inset -1px -1px 0 #22cfe0, inset 1px 1px 0 rgba(255, 255, 255, 0.7);
  background: linear-gradient(#9ab6d5 0, #b9d1ea 28px, #d2e2f3 118px, #b9d1ea 119px, #b9d1ea);
  padding: 0 9px 8px 8px;
  display: flex;
  flex-direction: column;
`;

const NotepadTitle = styled.div`
  height: 28px;
  flex: none;
  display: flex;
  align-items: center;
  padding: 5px 0 0 2px;
`;

const MenuBar = styled.div`
  height: 20px;
  flex: none;
  display: grid;
  grid-template-columns: 32px 34px 52px 39px auto;
  align-items: center;
  padding: 0 0 1px 6px;
  background: linear-gradient(#fff 0, #e9edf7 7px, #d5dbee 8px, #e2e6f5 18px, #b6bccc 18px);
  border-bottom: 1px solid #fff;
`;

const TextArea = styled.div`
  height: 549px;
  flex: none;
  display: flex;
  padding-top: 2px;
  border-top: 1px solid #3f79b5;
  border-bottom: 1px solid #f8fbff;
  background: #fff;
  justify-content: flex-end;
`;

const TextColumn = styled.div`
  flex: 1;
  min-width: 0;
  display: flex;
  flex-direction: column;
`;

const TextView = styled.div`
  flex: 1;
  width: 646px;
  padding: 0 0 0 2px;
  overflow: hidden;
`;

const TextLine = styled.div<{ $caret?: boolean }>`
  width: 583px;
  height: 13px;
  transform: scaleX(1.1072);
  transform-origin: 0 0;
  font-family: "DejaVu Sans Mono", monospace;
  font-size: 12px;
  line-height: 13px;
  white-space: pre;
  border-left: 1px solid ${(p) => (p.$caret ? "#000" : "transparent")};
  text-indent: -1px;
`;

const lines = [
  "<--- INSTRUCTION RESTORE FILE --->",
  "",
  "All of you files are encrypted with RSA-2048.",
  "More information about the RSA can be found here:",
  "http://en.wikipedia.org/wiki/RSA_(cryptosystem)",
  "",
  "Decrypting of  files is only possible with the private key and decrypt program, w",
  "",
  "To receive your private key:",
  "Contact us by email , send us an email your (personal identification) ID number a",
  "Our specialist will contact you within 24 hours.",
  "",
  "E-MAILS:",
  " supl@post.com - SUPPORT;",
  " supl@oath.com - SUPPORT RESERVE;",
  "",
  "Please do not waste your time!  You have 72 hours only! After that  server  doubl",
  "",
  "Your personal identification ID: 5abcf0bee0ce337d",
  "",
  "",
  " ^_- LESLI SPYING ON YOU -_-Your personal identification ID: 5abcf0bee0ce337d",
  "",
  "",
  " ^_- LESLI SPYING ON YOU -_-",
];

const ScrollColumn = styled.div`
  display: flex;
  flex-direction: column;
  width: 16px;
  background: #efefef;
`;

const Grip = styled.svg`
  margin: 5px 0 0 4px;
`;

const Notepad = () => (
  <NotepadWindow>
    <NotepadTitle>
      <svg width="15" height="16"><path d="M2 2h11l2 12-1 1.500H3z" fill="#a9854f" /><path d="M1 2h11.500v12.500H1z" fill="#8ecfda" stroke="#4b8fa0" strokeWidth=".8" /><path d="M2.500 5h8M2.500 7h8M2.500 9h8" stroke="#d0f0f4" /><path d="M2 1.500h11" stroke="#eef" strokeWidth="2" strokeDasharray="1 1" /></svg>
      <Spacer $w={3} />
      <Label $size={11.6}>INSTRUCTION RESTORE FILE - Notepad</Label>
      <Spacer />
      <CaptionButtons active />
    </NotepadTitle>
    <MenuBar>
      {["File", "Edit", "Format", "View", "Help"].map((m) => <Label key={m}>{m}</Label>)}
    </MenuBar>
    <TextArea>
      <TextColumn>
        <TextView>
          {lines.map((t, i) => <TextLine key={i} $caret={i === 17}>{t}</TextLine>)}
        </TextView>
        <AeroBar $len={648}>
          <Tri d="left" />
          <AeroThumb $len={430} $m={8}>
            <svg width="9" height="7"><path d="M.500 0v7M3.500 0v7M6.500 0v7" stroke="#555" /><path d="M1.500 0v7M4.500 0v7M7.500 0v7" stroke="#fff" /></svg>
          </AeroThumb>
          <Tri d="right" />
        </AeroBar>
      </TextColumn>
      <ScrollColumn>
        <AeroBar $vertical $len={529}>
          <Tri d="up" c="#888" />
          <Spacer />
          <Tri d="down" c="#888" />
        </AeroBar>
        <Grip width="10" height="9"><path d="M8 0h1.500v1.500H8zM8 3.500h1.500V5H8zM8 7h1.500v1.500H8zM4.500 3.500H6V5H4.500zM4.500 7H6v1.500H4.500zM1 7h1.500v1.500H1z" fill="#b9b9b9" /></Grip>
      </ScrollColumn>
    </TextArea>
  </NotepadWindow>
);

/* ---------- taskbar ---------- */

const HiddenEdge = styled.div`
  position: absolute;
  left: 266px;
  top: 604px;
  width: 420px;
  height: 4px;
  background: #e9eef3;
  border-left: 1px solid #444;
  border-bottom: 1px solid #444;
`;

const Taskbar = styled.div`
  position: absolute;
  left: 0;
  top: 608px;
  width: 1365px;
  height: 39px;
  display: flex;
  align-items: center;
  border-top: 1px solid #59636f;
  box-shadow: inset 0 1px 0 rgba(225, 236, 247, 0.8);
  background: linear-gradient(90deg, #8497af 0, #8395ae 58px, #a7c0dc 80px, #a7c0dc 1118px, #8296af 1170px, #8296af 100%);
`;

const TaskButton = styled.div<{ $w: number; $open?: boolean; $active?: boolean; $stack?: boolean }>`
  width: ${(p) => p.$w}px;
  height: 38px;
  flex: none;
  display: flex;
  align-items: center;
  justify-content: center;
  ${(p) =>
    p.$open &&
    css`
      border: 1px solid #32404f;
      border-bottom: 0;
      border-radius: 3px 3px 0 0;
      box-shadow: inset 0 0 0 1px rgba(255, 255, 255, 0.75)${p.$stack ? ", 3px 0 0 #b6cbe2, 4px 0 0 #46556a" : ""};
      background: ${p.$active ? "linear-gradient(135deg, #f6fafd, #dfe8f2 60%, #cdd9e7)" : "linear-gradient(135deg, #d9e4f0, #b9cbdf 50%, #c9d8e9)"};
    `}
`;

const Clock = styled.div`
  width: 70px;
  color: #fff;
  font-size: 11.3px;
  line-height: 17px;
  text-align: center;
  padding-top: 1px;
  text-shadow: 0 0 2px rgba(40, 60, 90, 0.5);
`;

const ShowDesktop = styled.div`
  width: 13px;
  height: 38px;
  border: 1px solid #44536a;
  border-right: 0;
  background: linear-gradient(150deg, #a9b8ca, #5f748f 50%, #6d84a1);
`;

const StartOrb = () => (
  <svg width="38" height="37" viewBox="0 0 38 37">
    <defs>
      <radialGradient id="orb" cx=".5" cy=".95" r=".95">
        <stop offset="0" stopColor="#3be0fb" /><stop offset=".4" stopColor="#1788c3" /><stop offset=".75" stopColor="#14496f" /><stop offset="1" stopColor="#8bb1c9" />
      </radialGradient>
    </defs>
    <circle cx="19" cy="18.500" r="17.500" fill="url(#orb)" stroke="#1e3f5d" />
    <path d="M4 14A15.500 15.500 0 0 1 34 14Q19 20 4 14z" fill="#cfe2ee" opacity=".45" />
    <path d="M11 9.500q4-2.500 8 0l-1.500 8q-4-2-8 0z" fill="#ee5a24" />
    <path d="M20 10q4 2 9-.500l-2 8.500q-4 2-8.500 0z" fill="#8fc73e" />
    <path d="M9 19q4-2 8 0l-2 8q-4-2-8 0z" fill="#5fb5ee" />
    <path d="M18 19.500q4.500 2 8.500.500l-2 8q-4.500 1.500-8.500-.500z" fill="#ffd047" />
  </svg>
);

const InternetExplorer = () => (
  <svg width="34" height="32" viewBox="0 0 34 32">
    <defs><linearGradient id="ie" x1="0" y1="0" x2="0" y2="1"><stop offset="0" stopColor="#15437f" /><stop offset=".5" stopColor="#2479bd" /><stop offset="1" stopColor="#55c8f2" /></linearGradient></defs>
    <path d="M30 18.500H13Q14 24 18 24q3 0 4-2.300h7.300Q27 29 18 29 6 28 6 16.500 7 4.500 18 4 30 5 30 18.500zM13 14h9.500Q22 9 18 9t-5 5z" fill="url(#ie)" stroke="#123d73" strokeWidth=".7" />
    <path d="M31 7Q32 1 26 2.500 16 5 8 15 0 26 4 29.500q2 1.500 7-1.500" fill="none" stroke="#f0b92c" strokeWidth="2.600" />
    <path d="M26 2.500Q16 5 8 15 2 23 3.500 28" fill="none" stroke="#ffe38a" strokeWidth=".8" />
  </svg>
);

const FileExplorerIcon = () => (
  <svg width="34" height="30" viewBox="0 0 34 30">
    <path d="M2 5V2q0-1 1-1h9l2 2h12v4h6v20H2z" fill="#f1d680" stroke="#b99b4b" />
    <path d="M4 2h6" stroke="#2fa84d" strokeWidth="2.500" /><path d="M13 4h8" stroke="#fff" strokeWidth="3" /><path d="M13 4h3" stroke="#db4a3a" strokeWidth="2.500" /><path d="M20 6.500h10" stroke="#fff" strokeWidth="2.500" /><path d="M20 6.500h4" stroke="#2e86d4" strokeWidth="2.500" />
    <path d="M2 8h15l2 2h13v17H2z" fill="#fbeaa6" stroke="#d3b65f" strokeWidth=".8" />
    <path d="M6 29V20q0-2 2-2h18q2 0 2 2v9h-5v-6H11v6z" fill="#8fd2ee" stroke="#4798c2" />
    <path d="M11 13v8M7 17h8" stroke="#fff" strokeWidth="1" />
  </svg>
);

const MediaPlayer = () => (
  <svg width="30" height="28" viewBox="0 0 30 28">
    <path d="M15 25h14l-4 2H12z" fill="#748ba6" opacity=".6" />
    <path d="M8 1.500h18v23H8z" fill="#7bbbe0" stroke="#4b8fb8" /><path d="M4 2.500h18v23H4z" fill="#8cc8e8" stroke="#4b8fb8" /><path d="M.5 1.500h18v24H.5z" fill="#a3d3ec" stroke="#5696bd" />
    <circle cx="11" cy="13.500" r="9" fill="#f0711c" stroke="#f9a565" /><path d="M7.500 7.500v12l10-6z" fill="#fff" />
  </svg>
);

const NotepadIcon = () => (
  <svg width="32" height="30" viewBox="0 0 32 30">
    <path d="M28 4l3 22-5 3-8-1z" fill="#b39864" /><path d="M13 2h16l-5 25L1 23z" fill="#e7f2f5" />
    <path d="M12 3h16l-5 24L1 23z" fill="#69bccb" stroke="#34788a" strokeWidth=".7" />
    <path d="M11 8 27 9 25 17 5 18z" fill="#a9dfe6" opacity=".7" />
    <path d="M12 2h17" stroke="#60686e" strokeWidth="2.500" strokeDasharray="1.200 1" /><path d="m1 23 22 4v2L2 25z" fill="#fff" stroke="#999" strokeWidth=".5" />
  </svg>
);

const TrayIcons = () => (
  <svg width="94" height="18" viewBox="1163 620 94 18">
    <path d="M1164.500 631h8l-4-4z" fill="#fff" />
    <g fill="#fff" stroke="#42526a" strokeWidth=".8">
      <path d="M1186 623h9v3h-6v9h5v2h-8z" /><path d="M1191 626v-3h1.500v3h3v-3h1.500v3h1.500v4q0 2-3 2.500V636h-2v-3.500q-3-.5-3-2.500v-4z" />
      <path d="M1210 627h2.500l4-4.500v13l-4-4.500h-2.500z" />
    </g>
    <path d="M1218.500 626q2 3 0 6M1220.500 624.500q3.500 4.500 0 9M1222.500 623.500q3 5 .5 11" fill="none" stroke="#fff" />
    <path d="M1237 625.500h11v9h-11z" fill="#60758f" stroke="#fff" strokeWidth="1.500" />
    <path d="M1234 621v3h1.500v8M1238 621v3h-4" fill="none" stroke="#fff" strokeWidth="1.500" />
    <path d="m1243.500 627 5.500 10h-11z" fill="#ffdb2b" stroke="#9b7d0f" strokeWidth=".7" /><path d="M1243.500 630v4M1243.500 635v1" stroke="#222" strokeWidth="1.200" />
  </svg>
);

const FlagIcon = () => (
  <svg width="17" height="18"><path d="M1.500 1.500v15M2 2.500q3-1.500 6 0t5-.5v8Q10 11 8 10T2 10.500z" fill="#fff" stroke="#fff" strokeWidth="1.400" /><circle cx="11" cy="11.500" r="4.500" fill="#dd2f27" stroke="#a61c17" strokeWidth=".6" /><path d="m9 9.500 4 4m0-4-4 4" stroke="#fff" strokeWidth="1.400" /></svg>
);

export default function App() {
  return (
    <>
      <Global />
      <Desktop>
        <Shortcuts>
          <Shortcut $h={109} $pad={6} $gap={3}><RecycleBin /><ShortcutText>Recycle Bin</ShortcutText></Shortcut>
          <Shortcut $h={104} $pad={0} $gap={3}><ChromeShortcut /><ShortcutText>{"Google\nChrome"}</ShortcutText></Shortcut>
          <Shortcut $h={90} $pad={0} $gap={4}><TextFile w={33} h={42} lines={9} /><ShortcutText>{"INSTRUCTI...\nRESTORE F..."}</ShortcutText></Shortcut>
        </Shortcuts>
        <HiddenEdge />
        <Browser />
        <Explorer />
        <Notepad />
        <Taskbar>
          <Spacer $w={8} />
          <StartOrb />
          <Spacer $w={27} />
          <InternetExplorer />
          <Spacer $w={14} />
          <TaskButton $w={55} $open $stack><FileExplorerIcon /></TaskButton>
          <Spacer $w={9} />
          <TaskButton $w={58}><MediaPlayer /></TaskButton>
          <Spacer $w={2} />
          <TaskButton $w={54} $open $stack><ChromeLogo size={30} /></TaskButton>
          <Spacer $w={8} />
          <TaskButton $w={60} $open $active><NotepadIcon /></TaskButton>
          <Spacer />
          <TrayIcons />
          <FlagIcon />
          <Spacer $w={6} />
          <Clock>4:26 AM<br />5/9/2017</Clock>
          <Spacer $w={2} />
          <ShowDesktop />
        </Taskbar>
      </Desktop>
    </>
  );
}
